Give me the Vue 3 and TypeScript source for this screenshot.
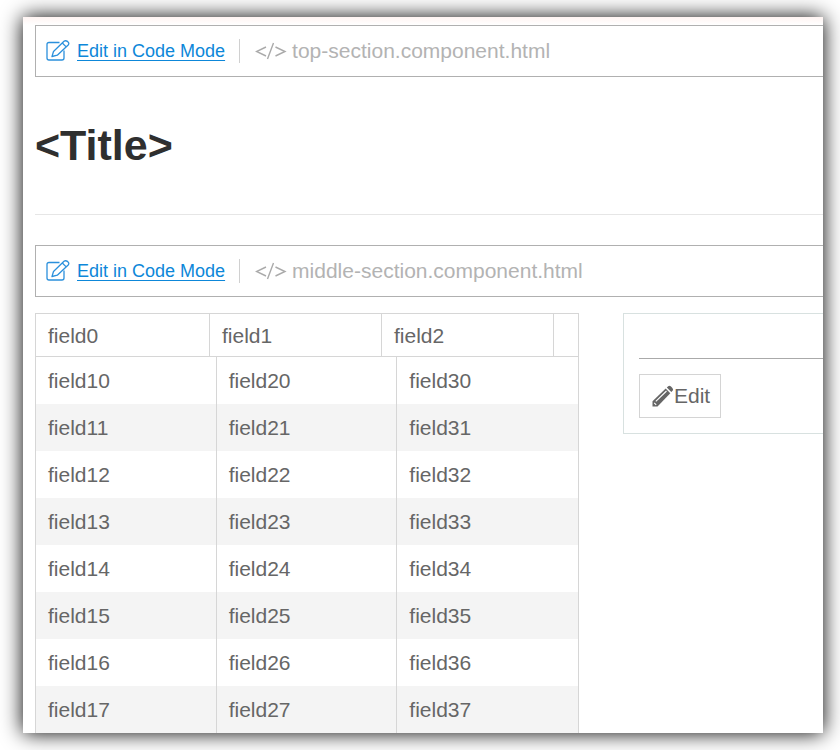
<script setup lang="ts">
interface Section {
  id: string
  file: string
}

const topSection: Section = { id: 'top', file: 'top-section.component.html' }
const middleSection: Section = { id: 'middle', file: 'middle-section.component.html' }

const headers: string[] = ['field0', 'field1', 'field2']
const rows: string[][] = Array.from({ length: 8 }, (_, row) =>
  [1, 2, 3].map((column) => `field${column}${row}`),
)
</script>

<template>
  <main class="page">
    <template v-for="section in [topSection, middleSection]" :key="section.id">
      <header class="bar">
        <a class="mode" href="#">
          <svg class="compose" viewBox="0 0 24 22" aria-hidden="true">
            <path d="M13.5 2.500H3Q1 2.500 1 4.500V18Q1 20 3 20H16Q18 20 18 18V10.500" />
            <path d="M6 16.500L7.500 11.500L18 1.300Q19.500 .1 21.500 1.400Q23.700 3.200 22.200 5L11.300 15.200Z" />
            <path d="M16.300 3L20.200 6.900" />
          </svg>
          <span class="mode-text">Edit in Code Mode</span>
        </a>
        <span class="file">
          <svg class="code" viewBox="0 0 32 20" aria-hidden="true">
            <path d="M11 6L1.500 10.500L11 15M20.500 6L30 10.500L20.500 15M18.500 2L12.500 18" />
          </svg>
          <span>{{ section.file }}</span>
        </span>
      </header>
      <h1 v-if="section.id === 'top'" class="title">&lt;Title&gt;</h1>
    </template>

    <div class="content">
      <table class="grid">
        <thead>
          <tr class="head-row">
            <th v-for="header in headers" :key="header" scope="col">{{ header }}</th>
            <td></td>
          </tr>
        </thead>
        <tbody>
          <tr v-for="row in rows" :key="row[0]" class="row">
            <td v-for="cell in row" :key="cell">{{ cell }}</td>
          </tr>
        </tbody>
      </table>

      <aside class="panel">
        <div class="panel-head"></div>
        <button type="button" class="edit">
          <svg class="pencil" viewBox="0 0 22 22" aria-hidden="true">
            <path class="solid" d="M.5 21.500V16.200L13.700 3.600L18.300 8.200L5.500 21.500Z" />
            <path class="solid" d="M14.800 2.600L16.200 1.300Q17.500 .3 19 1.600L20.400 3Q21.700 4.500 20.600 5.800L19.300 7.100Z" />
            <path class="shine" d="M3.800 16.300L14.500 6M2.200 17.800L4.200 19.800" />
          </svg>
          <span>Edit</span>
        </button>
      </aside>
    </div>
  </main>
</template>

<style>
body {
  margin: 0;
  background: #fff;
}

#app {
  display: flow-root;
}
</style>

<style scoped>
.page {
  margin: 17px 17px 17px 23px;
  padding: 8px 0 0 12px;
  overflow: hidden;
  background: linear-gradient(#fff4f2, #fff 8px);
  box-shadow: 0 0 20px #000;
  color: #666;
  font-family: "Liberation Sans", Arial, sans-serif;
  font-size: 21px;
}

.bar {
  display: flex;
  align-items: center;
  box-sizing: border-box;
  height: 52px;
  padding-left: 10px;
  border: 1px solid #b0b0b0;
  border-right: 0;
  background: #fff;
}

.mode {
  display: flex;
  align-items: center;
  gap: 7px;
  padding-right: 14px;
  color: #0d87d9;
  font-size: 18px;
  text-decoration: none;
}

.mode-text {
  text-decoration: underline;
  text-decoration-thickness: 1px;
  text-underline-offset: 3px;
}

.compose {
  width: 24px;
  height: 22px;
  fill: none;
  stroke: #2b90dc;
  stroke-width: 1.3;
  stroke-linejoin: round;
}

.file {
  display: flex;
  align-items: center;
  gap: 5px;
  padding-left: 15px;
  border-left: 1px solid #d0d0d0;
  color: #b3b3b3;
}

.code {
  width: 32px;
  height: 20px;
  fill: none;
  stroke: #aaa;
  stroke-width: 1.4;
}

.title {
  margin: 0 0 30px;
  padding: 44px 0;
  border-bottom: 1px solid #e6e6e6;
  color: #2f2f2f;
  font-size: 43px;
  line-height: 49px;
}

.content {
  display: grid;
  grid-template-columns: minmax(0, 544fr) minmax(0, 200fr);
  align-items: start;
  gap: 44px;
  margin-top: 16px;
}

.grid {
  display: block;
  box-sizing: border-box;
  border: 1px solid #d6d6d6;
  border-bottom: 0;
}

.grid thead,
.grid tbody {
  display: block;
}

.head-row {
  display: grid;
  grid-template-columns: 174fr 172fr 172fr 24fr;
  border-bottom: 1px solid #d6d6d6;
  line-height: 42px;
}

.head-row th {
  line-height: 44px;
  height: 42px;
}

.row {
  display: grid;
  grid-template-columns: repeat(3, 1fr);
  line-height: 47px;
}

.row:nth-child(even) {
  background: #f4f4f4;
}

.grid th,
.grid td {
  padding: 0 0 0 12px;
  border-right: 1px solid #d6d6d6;
  font-weight: 400;
  text-align: left;
}

.grid td:last-child {
  border-right: 0;
}

.panel {
  padding: 0 0 15px 15px;
  border: 1px solid #d8e1e0;
  border-right: 0;
}

.panel-head {
  height: 44px;
  margin-bottom: 15px;
  border-bottom: 1px solid #aaa;
}

.edit {
  display: flex;
  align-items: center;
  box-sizing: border-box;
  height: 44px;
  padding: 0 10px 0 12px;
  border: 1px solid #d4d4d4;
  background: #fff;
  color: #666;
  font: inherit;
}

.pencil {
  width: 22px;
  height: 22px;
}

.solid {
  fill: #666;
}

.shine {
  fill: none;
  stroke: #fff;
  stroke-width: 1.1;
}
</style>
